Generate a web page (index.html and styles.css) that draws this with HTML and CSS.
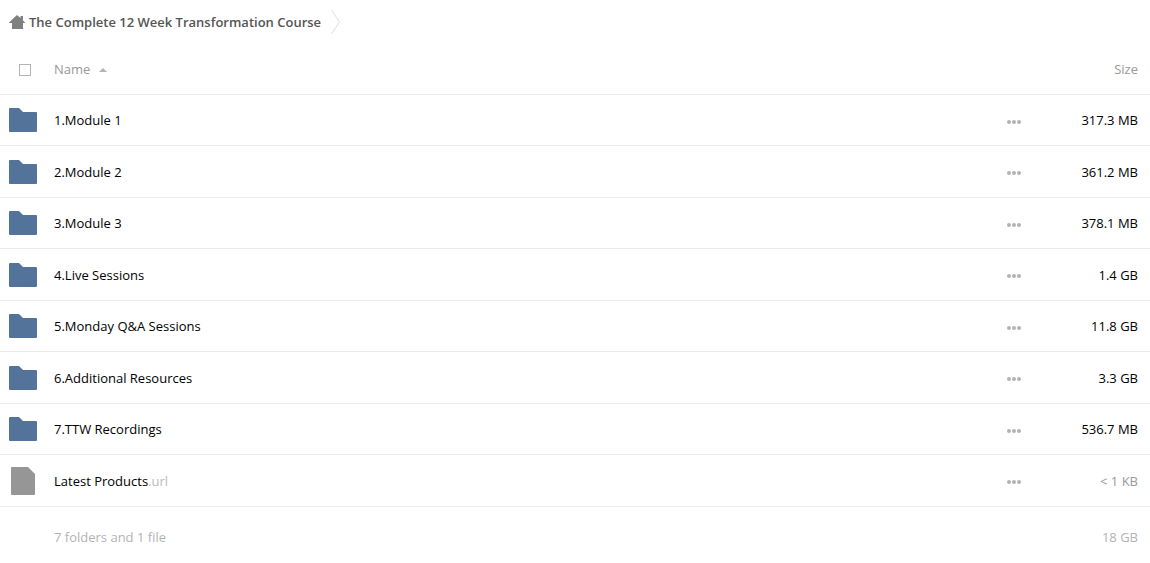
FILE: index.html
```
<!DOCTYPE html>
<html lang="en">
<head>
    <meta charset="UTF-8">
    <meta name="viewport" content="width=device-width, initial-scale=1.0">
    <title>The Complete 12 Week Transformation Course</title>
    <link rel="stylesheet" href="styles.css">
</head>
<body>

    <!-- Shared icons -->
    <svg class="sprite" aria-hidden="true">
        <symbol id="folder" viewBox="0 0 28 24">
            <path d="M1 0h9l4 4h13a1 1 0 0 1 1 1v18a1 1 0 0 1-1 1H1a1 1 0 0 1-1-1V1a1 1 0 0 1 1-1z"/>
        </symbol>
        <symbol id="file" viewBox="0 0 24 28">
            <path d="M1 0h16l7 7v20a1 1 0 0 1-1 1H1a1 1 0 0 1-1-1V1a1 1 0 0 1 1-1z"/>
        </symbol>
        <symbol id="dots" viewBox="0 0 14 4">
            <circle cx="2" cy="2" r="2"/>
            <circle cx="7" cy="2" r="2"/>
            <circle cx="12" cy="2" r="2"/>
        </symbol>
    </svg>

    <!-- Breadcrumbs -->
    <nav class="breadcrumbs">
        <a href="#">
            <svg class="home-icon" viewBox="0 0 16 14" aria-hidden="true"><path d="M8 0l3.500 3V1H14v4.500L16 7.500V8h-2v6H3V8H0v-.500z"/></svg>
            <span>The Complete 12 Week Transformation Course</span>
        </a>
        <svg class="separator" viewBox="0 0 9 26" aria-hidden="true"><path d="M.500 1l8 12-8 12"/></svg>
    </nav>

    <!-- File list -->
    <table class="files">
        <thead>
            <tr>
                <th class="icon"><input type="checkbox" class="select-all" aria-label="Select all"></th>
                <th class="name"><button type="button" class="sort">Name <span class="arrow"></span></button></th>
                <th class="actions"></th>
                <th class="size"><button type="button" class="sort">Size</button></th>
            </tr>
        </thead>
        <tbody>
            <tr>
                <td class="icon"><svg class="folder"><use href="#folder"/></svg></td>
                <td class="name"><a href="#">1.Module 1</a></td>
                <td class="actions"><button type="button" aria-label="More"><svg><use href="#dots"/></svg></button></td>
                <td class="size">317.3 MB</td>
            </tr>
            <tr>
                <td class="icon"><svg class="folder"><use href="#folder"/></svg></td>
                <td class="name"><a href="#">2.Module 2</a></td>
                <td class="actions"><button type="button" aria-label="More"><svg><use href="#dots"/></svg></button></td>
                <td class="size">361.2 MB</td>
            </tr>
            <tr>
                <td class="icon"><svg class="folder"><use href="#folder"/></svg></td>
                <td class="name"><a href="#">3.Module 3</a></td>
                <td class="actions"><button type="button" aria-label="More"><svg><use href="#dots"/></svg></button></td>
                <td class="size">378.1 MB</td>
            </tr>
            <tr>
                <td class="icon"><svg class="folder"><use href="#folder"/></svg></td>
                <td class="name"><a href="#">4.Live Sessions</a></td>
                <td class="actions"><button type="button" aria-label="More"><svg><use href="#dots"/></svg></button></td>
                <td class="size">1.4 GB</td>
            </tr>
            <tr>
                <td class="icon"><svg class="folder"><use href="#folder"/></svg></td>
                <td class="name"><a href="#">5.Monday Q&amp;A Sessions</a></td>
                <td class="actions"><button type="button" aria-label="More"><svg><use href="#dots"/></svg></button></td>
                <td class="size">11.8 GB</td>
            </tr>
            <tr>
                <td class="icon"><svg class="folder"><use href="#folder"/></svg></td>
                <td class="name"><a href="#">6.Additional Resources</a></td>
                <td class="actions"><button type="button" aria-label="More"><svg><use href="#dots"/></svg></button></td>
                <td class="size">3.3 GB</td>
            </tr>
            <tr>
                <td class="icon"><svg class="folder"><use href="#folder"/></svg></td>
                <td class="name"><a href="#">7.TTW Recordings</a></td>
                <td class="actions"><button type="button" aria-label="More"><svg><use href="#dots"/></svg></button></td>
                <td class="size">536.7 MB</td>
            </tr>
            <tr>
                <td class="icon"><svg class="file"><use href="#file"/></svg></td>
                <td class="name"><a href="#">Latest Products<span class="ext">.url</span></a></td>
                <td class="actions"><button type="button" aria-label="More"><svg><use href="#dots"/></svg></button></td>
                <td class="size small">&lt; 1 KB</td>
            </tr>
        </tbody>
        <tfoot>
            <tr>
                <td></td>
                <td>7 folders and 1 file</td>
                <td></td>
                <td class="size">18 GB</td>
            </tr>
        </tfoot>
    </table>

</body>
</html>
```
FILE: styles.css
```
body {
    font-family: "Open Sans", "Noto Sans", sans-serif;
    font-size: 13px;
    line-height: 18px;
    color: #000;
    background-color: #fff;
    margin: 0;
}

a {
    color: inherit;
    text-decoration: none;
}

button {
    font: inherit;
    color: inherit;
    background: none;
    border: none;
    padding: 0;
    cursor: pointer;
}

svg {
    display: block;
}

.sprite {
    display: none;
}

/* Breadcrumbs */
.breadcrumbs {
    display: flex;
    align-items: center;
    gap: 10px;
    height: 44px;
    padding-left: 9px;
}

.breadcrumbs a {
    display: flex;
    align-items: center;
    gap: 4px;
    font-weight: 600;
    color: #555;
}

.home-icon {
    width: 16px;
    height: 14px;
    fill: #808080;
}

.separator {
    width: 9px;
    height: 26px;
    fill: none;
    stroke: #ddd;
}

/* File list */
.files {
    width: 100%;
    border-spacing: 0;
    table-layout: fixed;
}

.files th,
.files td {
    height: 50px;
    padding: 0;
    text-align: left;
    vertical-align: middle;
    border-bottom: 1px solid #ebebeb;
}

.files th {
    font-weight: normal;
    color: #999;
}

/* Rows alternate 51px and 52px */
.files tbody tr:nth-child(even) td {
    height: 51px;
}

.files .icon {
    width: 45px;
    padding-left: 9px;
}

.files .actions {
    width: 53px;
}

.files .size {
    width: 94px;
    padding-right: 12px;
    text-align: right;
}

.files .small {
    color: #999;
}

.select-all {
    appearance: none;
    display: block;
    width: 12px;
    height: 12px;
    margin: 2px 0 0 10px;
    border: 1px solid #b3b3b3;
    background-color: #fff;
}

.select-all:checked {
    background-color: #54739b;
}

.arrow {
    display: inline-block;
    margin-left: 5px;
    vertical-align: 2px;
    border: 4px solid transparent;
    border-top: none;
    border-bottom-color: #b3b3b3;
}

.folder {
    width: 28px;
    height: 24px;
    fill: #54739b;
}

.file {
    width: 24px;
    height: 28px;
    margin-left: 2px;
    fill: #969696;
}

.ext {
    color: #bbb;
}

.actions button {
    display: block;
    padding: 10px 16px 7px;
}

.actions svg {
    width: 14px;
    height: 4px;
    fill: #b3b3b3;
}

.files tfoot td {
    height: 18px;
    padding-top: 21px;
    padding-bottom: 8px;
    color: #b3b3b3;
    border-bottom: none;
}
```
